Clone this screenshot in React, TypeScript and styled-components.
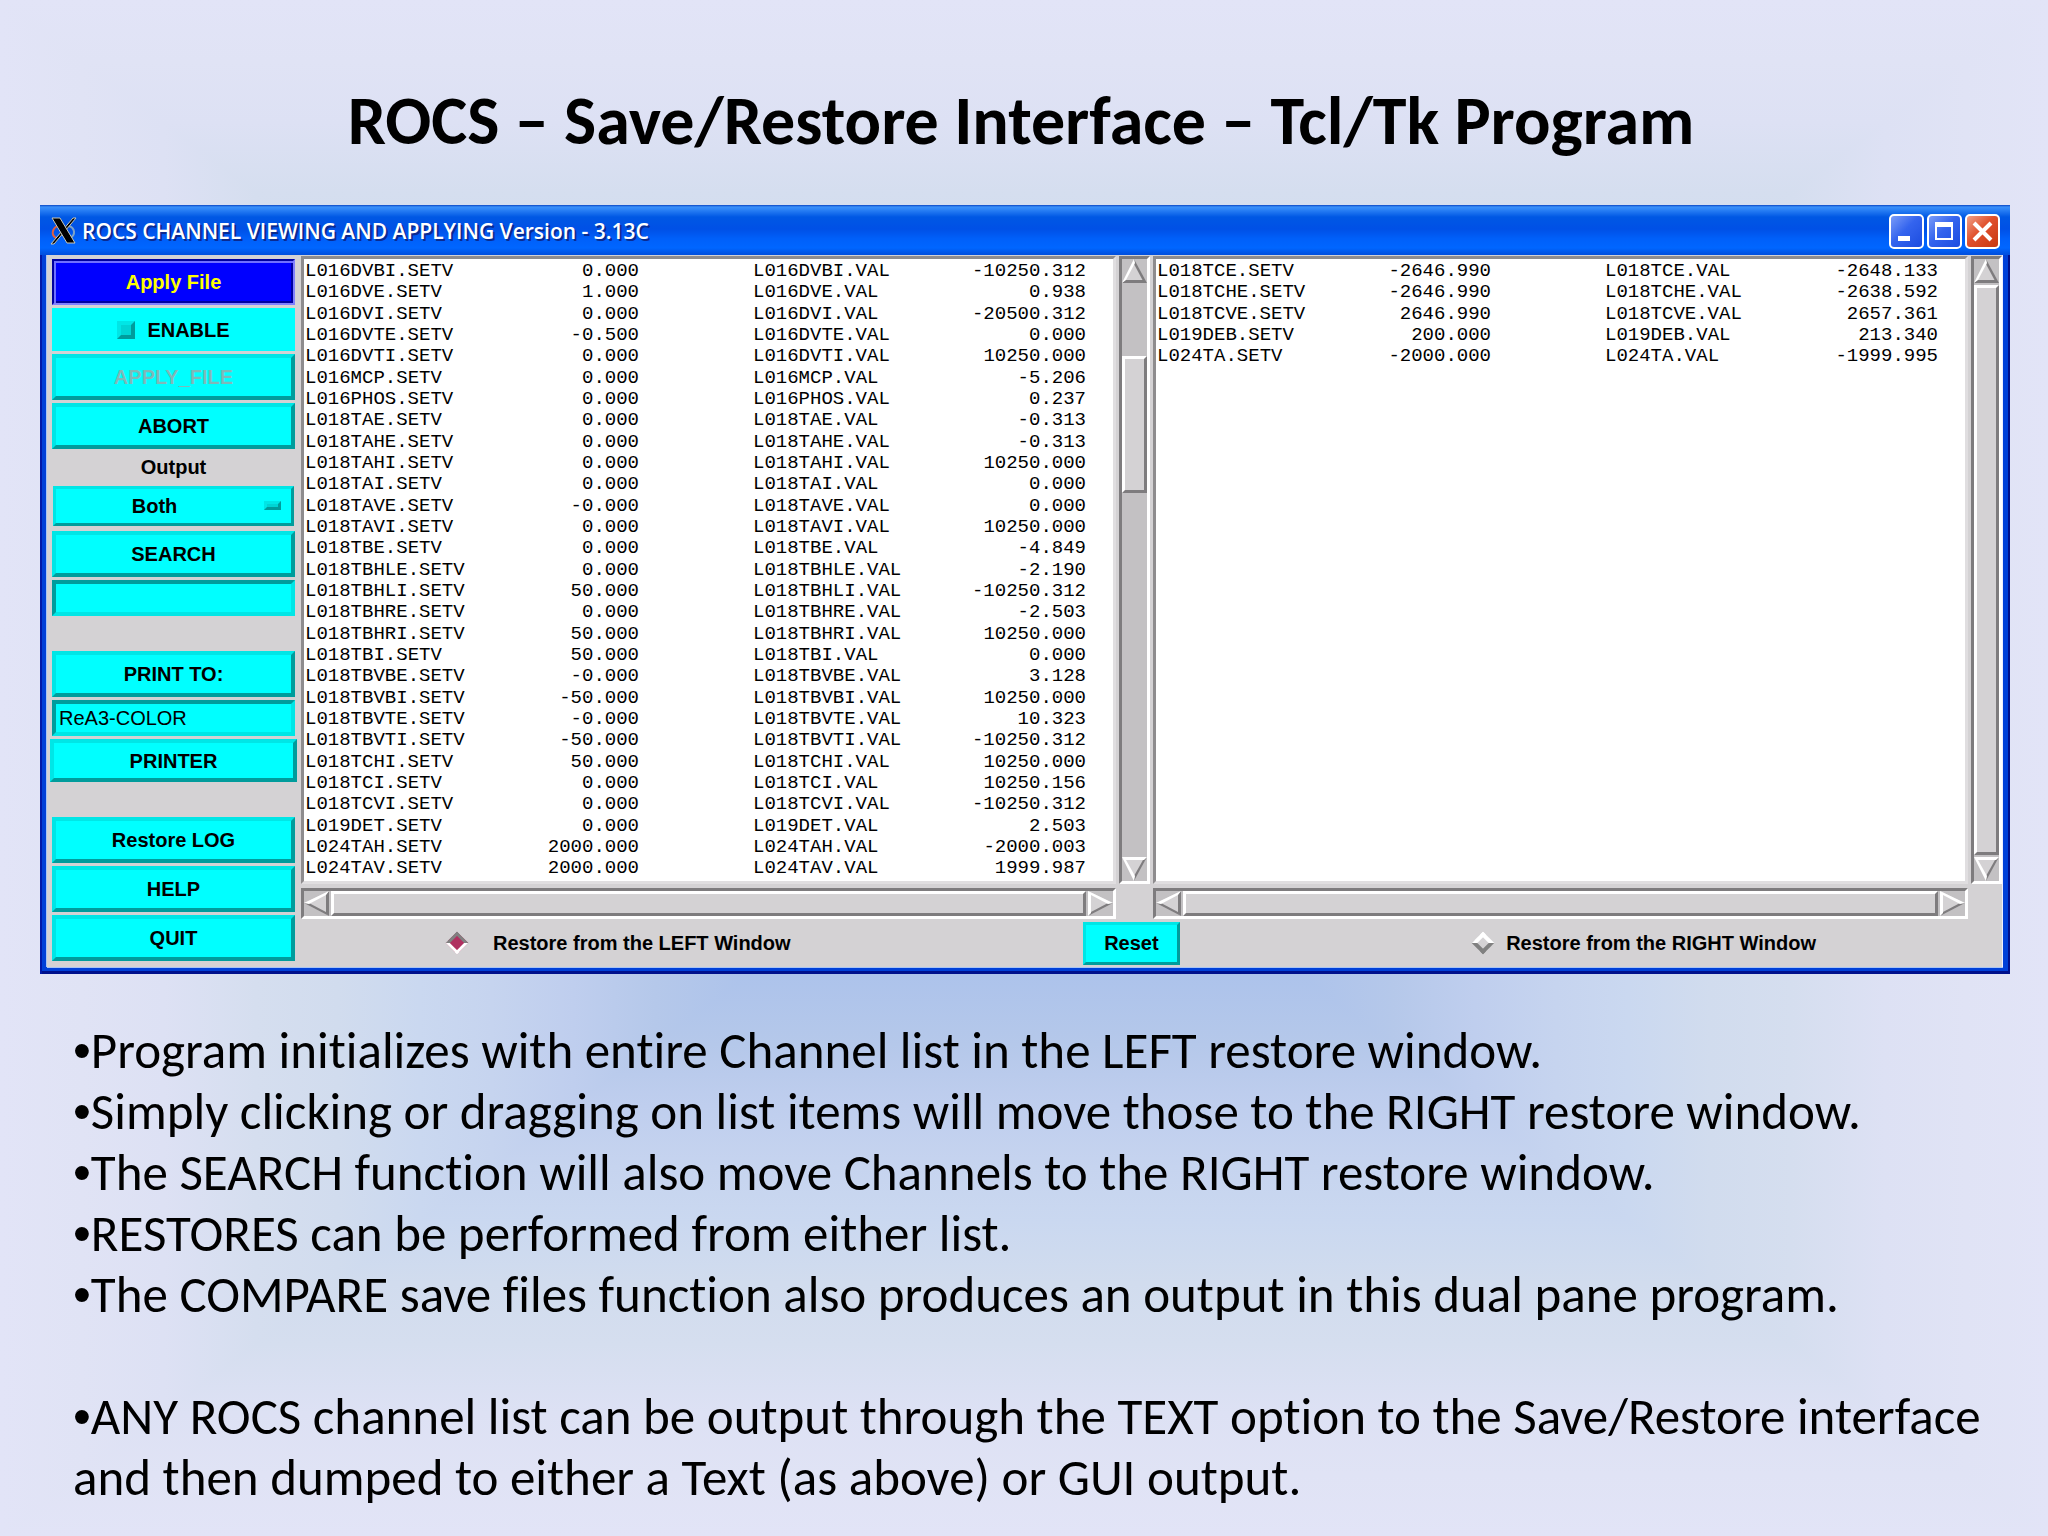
import React, { useState } from "react";
import styled, { createGlobalStyle, css } from "styled-components";

const GlobalStyle = createGlobalStyle`
  *, *::before, *::after { box-sizing: border-box; }
  body { margin: 0; background: #e2e4f7; }
`;

const sans = `"Liberation Sans", Arial, sans-serif`;
const cyan = "#00ffff";
const cyanLight = "#00e6e6";
const cyanDark = "#009c9c";
const grey = "#d4d2d4";

/* ---------- slide ---------- */

const Slide = styled.main`
  position: relative;
  isolation: isolate;
  min-height: 100vh;
  display: flex;
  flex-direction: column;
  padding: 81px 38px 0 40px;
  color: #000;
`;

const Backdrop = styled.svg`
  position: absolute;
  inset: 0;
  z-index: -1;
  width: 100%;
  height: 100%;
`;

const Heading = styled.h1`
  margin: 0 0 44px;
  padding-right: 8px;
  text-align: center;
  font: 700 68px/80px Carlito, Lato, sans-serif;
`;

const Notes = styled.ul`
  margin: 46px 0 0;
  padding: 0 0 0 33px;
  list-style: none;
  font: 400 51px/61px Carlito, Lato, sans-serif;
  font-variant-ligatures: no-common-ligatures;
`;

const Note = styled.li<{ $spaced?: boolean }>`
  margin-top: ${(p) => (p.$spaced ? "61px" : "0")};
  &::before {
    content: "•";
    font-family: ${sans};
    line-height: 1;
  }
`;

/* ---------- window frame ---------- */

const Window = styled.section`
  display: flex;
  flex-direction: column;
  padding: 0 7px 7px;
  background: #0040d8;
  box-shadow: inset 2px 0 #0018a8, inset -2px 0 #00108c, inset 0 -3px #00108c;
`;

const TitleBar = styled.header`
  display: flex;
  align-items: center;
  height: 50px;
  margin: 0 -7px;
  padding: 2px 10px 0 10px;
  background: linear-gradient(
    #0a45c4 0,
    #3a90fa 2px,
    #2a80f5 5px,
    #0058e4 12px,
    #0050e6 24px,
    #0060fa 34px,
    #0066ff 43px,
    #0050e0 49px
  );
`;

const WindowTitle = styled.h2`
  flex: 1;
  margin: 0 0 0 5px;
  color: #fff;
  font: 600 21px/32px "Open Sans", "Noto Sans", sans-serif;
  white-space: nowrap;
  text-shadow: 2px 2px #0a2a90;
`;

const Controls = styled.div`
  display: flex;
  gap: 3px;
`;

const ControlButton = styled.button<{ $close?: boolean }>`
  display: grid;
  place-items: center;
  width: 35px;
  height: 35px;
  padding: 0;
  border: 2px solid #fff;
  border-radius: 5px;
  background: ${(p) =>
    p.$close
      ? "linear-gradient(135deg, #f0a088, #e0502c 45%, #c83810)"
      : "linear-gradient(135deg, #7a9cf8, #3464ee 45%, #1c4ce0)"};
`;

const Client = styled.div`
  display: grid;
  grid-template-columns: 254px 1fr;
  background: ${grey};
  border-right: 1px solid #eef;
  box-shadow: 0 1px #a8c4f4, -1px 0 #a8c4f4;
`;

/* ---------- sidebar ---------- */

const Sidebar = styled.nav`
  display: flex;
  flex-direction: column;
  justify-content: space-between;
  padding: 4px 6px 6px 5px;
`;

const Group = styled.div`
  display: flex;
  flex-direction: column;
  gap: 3px;
`;

const raised = css`
  border: 4px solid;
  border-color: ${cyanLight} ${cyanDark} ${cyanDark} ${cyanLight};
  background: ${cyan};
  color: #000;
`;

const sunken = css`
  border: 4px solid;
  border-color: ${cyanDark} ${cyanLight} ${cyanLight} ${cyanDark};
  background: ${cyan};
  color: #000;
`;

const label = css`
  font: 700 20px/24px ${sans};
`;

const SideButton = styled.button<{ $wide?: boolean }>`
  ${raised}
  ${label}
  height: ${(p) => (p.$wide ? "43px" : "46px")};
  margin: ${(p) => (p.$wide ? "0 -2px" : "0")};
  padding: 0;
  &:disabled {
    color: #80b8b8;
  }
`;

const MenuButton = styled.button`
  ${label}
  height: 46px;
  padding: 0;
  border: 2px solid;
  border-color: #0000a0 #8080ff #8080ff #0000a0;
  background: #0000ff;
  box-shadow: inset 2px 2px #7070ff, inset -2px -2px #0000a0;
  color: #ffff00;
`;

const Toggle = styled.label`
  ${label}
  display: flex;
  align-items: center;
  justify-content: center;
  gap: 12px;
  height: 43px;
  background: ${cyan};
  color: #000;
`;

const Tick = styled.input`
  appearance: none;
  width: 18px;
  height: 18px;
  margin: 0;
  border: 4px solid;
  border-color: ${cyanLight} ${cyanDark} ${cyanDark} ${cyanLight};
  background: #00d4d4;
  &:checked {
    border-color: ${cyanDark} ${cyanLight} ${cyanLight} ${cyanDark};
    background: #b03060;
  }
`;

const FieldLabel = styled.label`
  ${label}
  height: 31px;
  line-height: 30px;
  text-align: center;
`;

const SelectBox = styled.div`
  position: relative;
  margin: 0 1px 2px;
`;

const Select = styled.select`
  ${raised}
  ${label}
  display: block;
  appearance: none;
  width: 100%;
  height: 40px;
  border-width: 3px;
  border-radius: 0;
  padding: 0 38px 0 0;
  text-align: center;
  text-align-last: center;
`;

const SelectMark = styled.span`
  position: absolute;
  right: 13px;
  top: 15px;
  width: 17px;
  height: 9px;
  border: 3px solid;
  border-color: ${cyanLight} ${cyanDark} ${cyanDark} ${cyanLight};
  background: #00d4d4;
  pointer-events: none;
`;

const Entry = styled.input`
  ${sunken}
  width: 100%;
  height: 36px;
  padding: 0 0 0 3px;
  border-radius: 0;
  font: 400 20px/24px ${sans};
`;

/* ---------- lists ---------- */

const Work = styled.div`
  display: grid;
  grid-template-columns: 1fr 31px 1fr 31px;
  grid-template-rows: auto 31px 1fr;
  column-gap: 3px;
  padding-top: 1px;
`;

const Pane = styled.div`
  margin-bottom: 4px;
  padding: 2px 27px 2px 1px;
  border: 3px solid;
  border-color: #8e8c8e #e0dee0 #e0dee0 #8e8c8e;
  background: #fff;
`;

const Table = styled.table`
  width: 100%;
  table-layout: fixed;
  border-collapse: collapse;
  font: 400 19px/21px "Liberation Mono", "Courier New", monospace;
  tr:nth-child(3n) td {
    height: 22px;
  }
`;

const Cell = styled.td<{ $value?: boolean }>`
  height: 21px;
  padding: 0;
  text-align: ${(p) => (p.$value ? "right" : "left")};
  white-space: nowrap;
`;

const ReadCell = styled(Cell)`
  padding-left: 114px;
`;

const NarrowCol = styled.col`
  width: 167px;
`;

const WideCol = styled.col`
  width: 282px;
`;

const Bar = styled.div<{ $horizontal?: boolean }>`
  display: flex;
  flex-direction: ${(p) => (p.$horizontal ? "row" : "column")};
  margin-bottom: ${(p) => (p.$horizontal ? "0" : "4px")};
  border: 3px solid;
  border-color: #7e7c7e #fff #fff #7e7c7e;
  background: #c3c1c3;
`;

const ArrowButton = styled.button`
  display: block;
  flex: 0 0 auto;
  padding: 0;
  border: 0;
  background: none;
  line-height: 0;
`;

const Trough = styled.div<{ $horizontal?: boolean }>`
  flex: 1;
  display: flex;
  flex-direction: ${(p) => (p.$horizontal ? "row" : "column")};
  padding: ${(p) => (p.$horizontal ? "0 2px" : "2px 0")};
`;

const Thumb = styled.div`
  border: 3px solid;
  border-color: #fff #7e7c7e #7e7c7e #fff;
  background: ${grey};
`;

/* ---------- footer ---------- */

const Footer = styled.div`
  grid-column: 1 / -1;
  display: flex;
  align-items: center;
  justify-content: space-between;
  height: 48px;
  padding: 0 186px 0 145px;
`;

const Choice = styled.label<{ $gap: number }>`
  ${label}
  display: flex;
  align-items: center;
  gap: ${(p) => p.$gap}px;
`;

const Diamond = styled.input`
  appearance: none;
  width: 16px;
  height: 16px;
  margin: 0 3px;
  border: 4px solid;
  border-color: #fff #808080 #808080 #fff;
  background: ${grey};
  rotate: 45deg;
  &:checked {
    border-color: #808080 #fff #fff #808080;
    border-width: 3px;
    background: #b03060;
  }
`;

const ResetButton = styled.button`
  ${raised}
  ${label}
  width: 97px;
  height: 43px;
  padding: 0;
  border-width: 3px;
`;

/* ---------- data ---------- */

type Row = [string, string, string];

const leftRows: Row[] = [
  ["L016DVBI", "0.000", "-10250.312"],
  ["L016DVE", "1.000", "0.938"],
  ["L016DVI", "0.000", "-20500.312"],
  ["L016DVTE", "-0.500", "0.000"],
  ["L016DVTI", "0.000", "10250.000"],
  ["L016MCP", "0.000", "-5.206"],
  ["L016PHOS", "0.000", "0.237"],
  ["L018TAE", "0.000", "-0.313"],
  ["L018TAHE", "0.000", "-0.313"],
  ["L018TAHI", "0.000", "10250.000"],
  ["L018TAI", "0.000", "0.000"],
  ["L018TAVE", "-0.000", "0.000"],
  ["L018TAVI", "0.000", "10250.000"],
  ["L018TBE", "0.000", "-4.849"],
  ["L018TBHLE", "0.000", "-2.190"],
  ["L018TBHLI", "50.000", "-10250.312"],
  ["L018TBHRE", "0.000", "-2.503"],
  ["L018TBHRI", "50.000", "10250.000"],
  ["L018TBI", "50.000", "0.000"],
  ["L018TBVBE", "-0.000", "3.128"],
  ["L018TBVBI", "-50.000", "10250.000"],
  ["L018TBVTE", "-0.000", "10.323"],
  ["L018TBVTI", "-50.000", "-10250.312"],
  ["L018TCHI", "50.000", "10250.000"],
  ["L018TCI", "0.000", "10250.156"],
  ["L018TCVI", "0.000", "-10250.312"],
  ["L019DET", "0.000", "2.503"],
  ["L024TAH", "2000.000", "-2000.003"],
  ["L024TAV", "2000.000", "1999.987"],
];

const rightRows: Row[] = [
  ["L018TCE", "-2646.990", "-2648.133"],
  ["L018TCHE", "-2646.990", "-2638.592"],
  ["L018TCVE", "2646.990", "2657.361"],
  ["L019DEB", "200.000", "213.340"],
  ["L024TA", "-2000.000", "-1999.995"],
];

const notes = [
  "Program initializes with entire Channel list in the LEFT restore window.",
  "Simply clicking or dragging on list items will move those to the RIGHT restore window.",
  "The SEARCH function will also move Channels to the RIGHT restore window.",
  "RESTORES can be performed from either list.",
  "The COMPARE save files function also produces an output in this dual pane program.",
];

/* ---------- parts ---------- */

const stops: [number, string][] = [
  [0, "#e2e4f7"],
  [8, "#e0e3f5"],
  [16, "#dde1f4"],
  [25, "#d5deef"],
  [33, "#d1dcee"],
  [41, "#cad8f0"],
  [48, "#c6d4ef"],
  [56, "#bfceee"],
  [64, "#b5c8ea"],
  [73, "#adc3eb"],
  [100, "#9ab5e4"],
];

function SlideBackdrop() {
  const sides = [
    { id: "t", x2: 0, y2: 50, x1: 0, y1: 0, points: "0,0 100,0 50,50" },
    { id: "b", x2: 0, y2: 50, x1: 0, y1: 100, points: "0,100 100,100 50,50" },
    { id: "l", x2: 50, y2: 0, x1: 0, y1: 0, points: "0,0 0,100 50,50" },
    { id: "r", x2: 50, y2: 0, x1: 100, y1: 0, points: "100,0 100,100 50,50" },
  ];
  return (
    <Backdrop viewBox="0 0 100 100" preserveAspectRatio="none" aria-hidden="true">
      <defs>
        {sides.map((s) => (
          <linearGradient key={s.id} id={s.id} gradientUnits="userSpaceOnUse" x1={s.x1} y1={s.y1} x2={s.x2} y2={s.y2}>
            {stops.map(([at, color]) => (
              <stop key={at} offset={`${at}%`} stopColor={color} />
            ))}
          </linearGradient>
        ))}
      </defs>
      {sides.map((s) => (
        <polygon key={s.id} points={s.points} fill={`url(#${s.id})`} shapeRendering="crispEdges" />
      ))}
    </Backdrop>
  );
}

function XLogo() {
  return (
    <svg width="27" height="28" viewBox="0 0 27 28" aria-hidden="true">
      <path d="M7 9C2 12 1 18 6 21" fill="none" stroke="#e06040" strokeWidth="2" />
      <path d="M19 9c6 2 7 9 1 12" fill="none" stroke="#7da2c8" strokeWidth="2" />
      <path d="M23 1h3L4 27H1z" fill="#000" stroke="#c8c8b8" strokeWidth="1" />
      <path d="M2 1h8l15 25h-8z" fill="#000" stroke="#c8c8b8" strokeWidth="1" />
    </svg>
  );
}

type Direction = "up" | "down" | "left" | "right";

const lightEdge = "#fff";
const darkEdge = "#7e7c7e";

const arrowEdges: Record<Direction, [string, string][]> = {
  up: [
    ["0,24 25,24 22,21 3,21", darkEdge],
    ["12,0 25,24 21,22 12,5", darkEdge],
    ["12,0 0,24 4,21 13,4", lightEdge],
  ],
  down: [
    ["25,0 12,24 12,19 21,3", darkEdge],
    ["0,0 12,24 13,19 4,3", lightEdge],
    ["0,0 25,0 22,3 3,3", lightEdge],
  ],
  left: [
    ["25,0 25,25 22,22 22,3", darkEdge],
    ["0,12 25,25 22,21 5,12", darkEdge],
    ["0,12 25,0 22,4 5,13", lightEdge],
  ],
  right: [
    ["0,25 25,12 20,12 3,21", darkEdge],
    ["0,0 25,12 20,13 3,4", lightEdge],
    ["0,0 0,25 3,22 3,3", lightEdge],
  ],
};

const arrowFaces: Record<Direction, string> = {
  up: "12,0 25,24 0,24",
  down: "0,0 25,0 12,24",
  left: "25,0 25,25 0,12",
  right: "0,0 25,12 0,25",
};

function Arrow({ direction }: { direction: Direction }) {
  const height = direction === "up" || direction === "down" ? 24 : 25;
  return (
    <ArrowButton type="button" aria-label={`Scroll ${direction}`}>
      <svg width="25" height={height} viewBox={`0 0 25 ${height}`}>
        <polygon points={arrowFaces[direction]} fill={grey} />
        {arrowEdges[direction].map(([points, fill]) => (
          <polygon key={points} points={points} fill={fill} />
        ))}
      </svg>
    </ArrowButton>
  );
}

function ScrollBar({ horizontal, start = 0, size = 1 }: { horizontal?: boolean; start?: number; size?: number }) {
  return (
    <Bar $horizontal={horizontal}>
      <Arrow direction={horizontal ? "left" : "up"} />
      <Trough $horizontal={horizontal}>
        <div style={{ flex: `${start} 0 0` }} />
        <Thumb style={{ flex: `${size} 0 0` }} />
        <div style={{ flex: `${1 - start - size} 0 0` }} />
      </Trough>
      <Arrow direction={horizontal ? "right" : "down"} />
    </Bar>
  );
}

function ChannelTable({ rows, name }: { rows: Row[]; name: string }) {
  return (
    <Table aria-label={name}>
      <colgroup>
        <NarrowCol />
        <NarrowCol />
        <WideCol />
        <col />
      </colgroup>
      <tbody>
        {rows.map(([channel, set, read]) => (
          <tr key={channel}>
            <Cell>{channel}.SETV</Cell>
            <Cell $value>{set}</Cell>
            <ReadCell>{channel}.VAL</ReadCell>
            <Cell $value>{read}</Cell>
          </tr>
        ))}
      </tbody>
    </Table>
  );
}

export default function App() {
  const [side, setSide] = useState("left");
  const [search, setSearch] = useState("");
  const [printer, setPrinter] = useState("ReA3-COLOR");

  return (
    <>
      <GlobalStyle />
      <Slide>
        <SlideBackdrop />
        <Heading>ROCS – Save/Restore Interface – Tcl/Tk Program</Heading>

        <Window aria-label="ROCS channel viewing and applying">
          <TitleBar>
            <XLogo />
            <WindowTitle>ROCS CHANNEL VIEWING AND APPLYING Version - 3.13C</WindowTitle>
            <Controls>
              <ControlButton type="button" aria-label="Minimize">
                <svg width="31" height="31" viewBox="0 0 31 31">
                  <path d="M7 20h12v5H7z" fill="#fff" />
                </svg>
              </ControlButton>
              <ControlButton type="button" aria-label="Maximize">
                <svg width="31" height="31" viewBox="0 0 31 31">
                  <path d="M6 6h18v18H6zM8 11v11h14V11z" fill="#fff" fillRule="evenodd" />
                </svg>
              </ControlButton>
              <ControlButton type="button" aria-label="Close" $close>
                <svg width="31" height="31" viewBox="0 0 31 31">
                  <path d="M7 7l17 17M24 7L7 24" stroke="#fff" strokeWidth="4" />
                </svg>
              </ControlButton>
            </Controls>
          </TitleBar>

          <Client>
            <Sidebar aria-label="Actions">
              <Group>
                <MenuButton type="button">Apply File</MenuButton>
                <Toggle>
                  <Tick type="checkbox" />
                  ENABLE
                </Toggle>
                <SideButton type="button" disabled>
                  APPLY_FILE
                </SideButton>
                <SideButton type="button">ABORT</SideButton>
                <FieldLabel htmlFor="output">Output</FieldLabel>
                <SelectBox>
                  <Select id="output" defaultValue="Both">
                    <option>Both</option>
                  </Select>
                  <SelectMark />
                </SelectBox>
                <SideButton type="button">SEARCH</SideButton>
                <Entry aria-label="Search text" value={search} onChange={(e) => setSearch(e.target.value)} />
              </Group>
              <Group>
                <SideButton type="button">PRINT TO:</SideButton>
                <Entry aria-label="Printer name" value={printer} onChange={(e) => setPrinter(e.target.value)} />
                <SideButton type="button" $wide>
                  PRINTER
                </SideButton>
              </Group>
              <Group>
                <SideButton type="button">Restore LOG</SideButton>
                <SideButton type="button">HELP</SideButton>
                <SideButton type="button">QUIT</SideButton>
              </Group>
            </Sidebar>

            <Work>
              <Pane>
                <ChannelTable rows={leftRows} name="Left restore list" />
              </Pane>
              <ScrollBar start={0.126} size={0.232} />
              <Pane>
                <ChannelTable rows={rightRows} name="Right restore list" />
              </Pane>
              <ScrollBar />
              <ScrollBar horizontal />
              <span />
              <ScrollBar horizontal />
              <span />
              <Footer>
                <Choice $gap={25}>
                  <Diamond type="radio" name="side" checked={side === "left"} onChange={() => setSide("left")} />
                  Restore from the LEFT Window
                </Choice>
                <ResetButton type="button">Reset</ResetButton>
                <Choice $gap={12}>
                  <Diamond type="radio" name="side" checked={side === "right"} onChange={() => setSide("right")} />
                  Restore from the RIGHT Window
                </Choice>
              </Footer>
            </Work>
          </Client>
        </Window>

        <Notes>
          {notes.map((text) => (
            <Note key={text}>{text}</Note>
          ))}
          <Note $spaced>
            ANY ROCS channel list can be output through the TEXT option to the Save/Restore interface and then dumped to
            either a Text (as above) or GUI output.
          </Note>
        </Notes>
      </Slide>
    </>
  );
}
